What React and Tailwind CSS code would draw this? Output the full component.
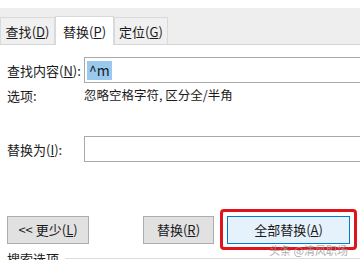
import React from "react";

const Tab = ({ label, hotkey, active, width }) => (
  <div
    className={
      active
        ? "h-[29px] -mb-px bg-white border border-b-0 border-[#d9d9d9] flex items-center justify-center"
        : "h-[27px] bg-[#f0f0f0] border border-b-0 border-[#dadada] flex items-center justify-center"
    }
    style={{ width }}
  >
    <span>
      {label}(<span className="underline">{hotkey}</span>)
    </span>
  </div>
);

export default function App() {
  return (
    <div
      className="w-[360px] h-[260px] overflow-hidden bg-white text-[13px] text-[#1a1a1a] leading-none"
      style={{ fontFamily: '"Noto Sans CJK SC", "Noto Sans", sans-serif' }}
    >
      <div className="h-[8px]" />

      {/* tab strip */}
      <div className="h-[37px] bg-[#eeeeee] border-b border-[#d4d4d4] flex items-end">
        <Tab label="查找" hotkey="D" width={55} />
        <Tab label="替换" hotkey="P" width={59} active />
        <Tab label="定位" hotkey="G" width={54} />
      </div>

      <div className="pl-[7px]">
        {/* find row */}
        <div className="mt-[12px] flex items-center">
          <div className="w-[77px]">
            查找内容(<span className="underline">N</span>):
          </div>
          <div className="flex-1 h-[26px] border border-r-0 border-[#a9a9a9] flex items-center pl-[2px]">
            <span className="bg-[#99c9ef] h-[19px] px-[2px] flex items-center text-[14px]">^m</span>
          </div>
        </div>

        {/* options row */}
        <div className="mt-[5px] flex items-center h-[15px]">
          <div className="w-[77px]">选项:</div>
          <div className="text-[12.5px]">忽略空格字符, 区分全/半角</div>
        </div>

        {/* replace row */}
        <div className="mt-[33px] flex items-center">
          <div className="w-[77px]">
            替换为(<span className="underline">I</span>):
          </div>
          <div className="flex-1 h-[26px] border border-r-0 border-[#a9a9a9]" />
        </div>

        {/* buttons */}
        <div className="mt-[47px] flex items-center">
          <button className="w-[82px] h-[28px] bg-[#e1e1e1] border border-[#adadad] flex items-center justify-center">
            &lt;&lt; 更少(<span className="underline">L</span>)
          </button>
          <button className="ml-[54px] w-[71px] h-[28px] bg-[#e1e1e1] border border-[#adadad] flex items-center justify-center">
            替换(<span className="underline">R</span>)
          </button>
          <div className="relative ml-[6px] w-[137px] h-[41px] border-[3px] border-[#e0141a] rounded-[4px] flex items-center justify-center">
            <button className="w-[123px] h-[28px] bg-[#e5f1fb] border border-[#0078d7] flex items-center justify-center">
              全部替换(<span className="underline">A</span>)
            </button>
            <span className="absolute right-[6px] bottom-[-9px] text-[11px] text-[#9a9a9a] opacity-80">
              头条 @清风职场
            </span>
          </div>
        </div>

        {/* search options */}
        <div className="mt-[2px] flex items-center">
          <span>搜索选项</span>
          <div className="ml-[6px] flex-1 h-px bg-[#dcdcdc]" />
        </div>
      </div>
    </div>
  );
}
